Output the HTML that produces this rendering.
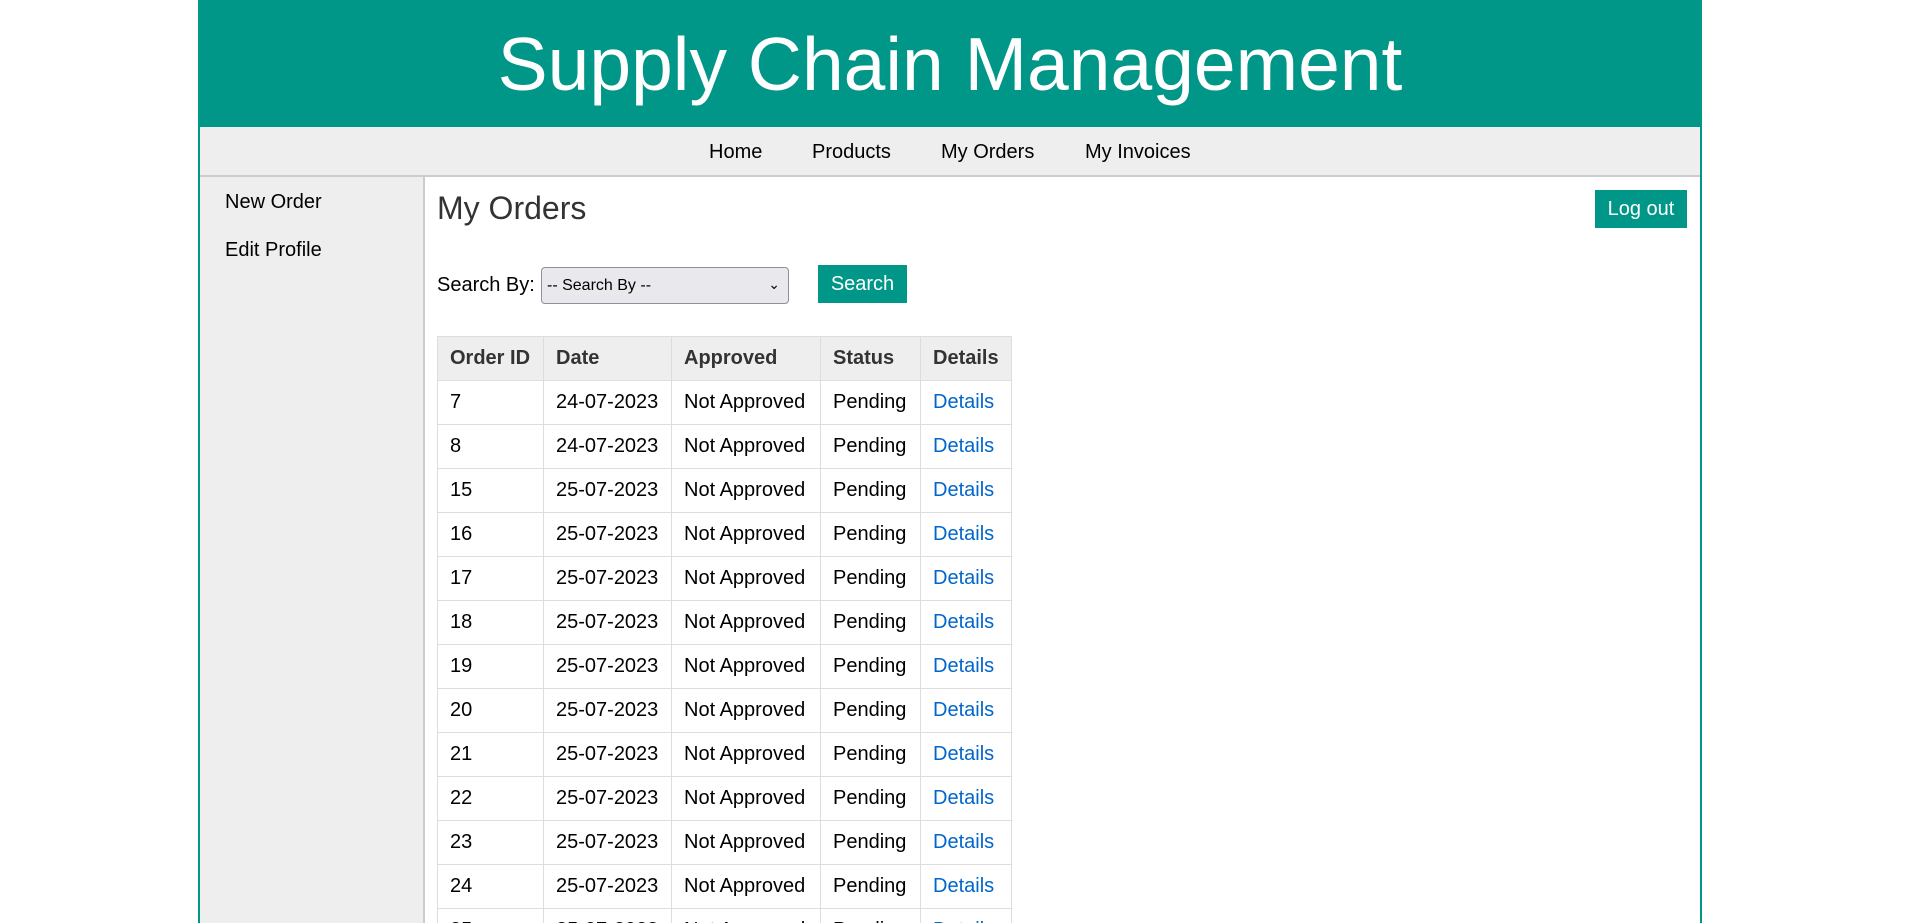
<!DOCTYPE html>
<html style="overflow:hidden;height:923px"><head><meta charset="utf-8"><style>
*{box-sizing:border-box;margin:0;padding:0}
body{width:1920px;height:923px;overflow:hidden;background:#fff;font-family:"Liberation Sans",Arial,sans-serif;position:relative}
.wrap{position:absolute;left:198px;top:0;width:1504px;height:923px;border-left:2px solid #009688;border-right:2px solid #009688;overflow:hidden}
.hdr{position:absolute;left:-2px;right:-2px;top:0;height:127px;background:#009688;color:#fff;font-size:75px;text-align:center;line-height:129px}
.nav{position:absolute;left:0;right:0;top:127px;height:50px;background:#eee;border-bottom:2px solid #ccc}
.nav span{position:absolute;top:14px;font-size:20px;color:#000}
.side{position:absolute;left:0;top:177px;width:225px;height:760px;background:#eee;border-right:2px solid #ccc}
.side div{position:absolute;left:25px;font-size:20px;color:#000}
h1{position:absolute;left:237px;top:190px;font-size:32px;font-weight:normal;color:#333}
.lbl{position:absolute;left:237px;top:274px;font-size:20px}
.sel{position:absolute;left:341px;top:267px;width:248px;height:37px;background:#e9e9ed;border:1px solid #8f8f9d;border-radius:4px;font-size:16px;padding:9px 5px}
.sel i{position:absolute;right:8px;top:8px;font-style:normal;font-size:14px}
.btn{position:absolute;background:#009688;color:#fff;font-size:20px;text-align:center}
table{position:absolute;left:237px;top:336px;border-collapse:collapse;font-size:20px}
td,th{border:1px solid #ddd;height:44px;padding:0 12px;text-align:left;white-space:nowrap}
th{background:#eee;color:#333}
td a{color:#0066cc;text-decoration:none}
</style></head><body>
<div class="wrap">
<div class="hdr">Supply Chain Management</div>
<div class="nav"><span style="left:509px">Home</span><span style="left:612px">Products</span><span style="left:741px">My Orders</span><span style="left:885px">My Invoices</span></div>
<div class="side"><div style="top:14px">New Order</div><div style="top:62px">Edit Profile</div></div>
<h1>My Orders</h1>
<div class="btn" style="left:1395px;top:190px;width:92px;height:38px;line-height:38px">Log out</div>
<div class="lbl">Search By:</div>
<div class="sel">-- Search By --<i>&#8964;</i></div>
<div class="btn" style="left:618px;top:265px;width:89px;height:38px;line-height:38px">Search</div>
<table>
<tr><th style="width:106px">Order ID</th><th style="width:128px">Date</th><th style="width:149px">Approved</th><th style="width:100px">Status</th><th style="width:91px">Details</th></tr>
<tr><td>7</td><td>24-07-2023</td><td>Not Approved</td><td>Pending</td><td><a>Details</a></td></tr>
<tr><td>8</td><td>24-07-2023</td><td>Not Approved</td><td>Pending</td><td><a>Details</a></td></tr>
<tr><td>15</td><td>25-07-2023</td><td>Not Approved</td><td>Pending</td><td><a>Details</a></td></tr>
<tr><td>16</td><td>25-07-2023</td><td>Not Approved</td><td>Pending</td><td><a>Details</a></td></tr>
<tr><td>17</td><td>25-07-2023</td><td>Not Approved</td><td>Pending</td><td><a>Details</a></td></tr>
<tr><td>18</td><td>25-07-2023</td><td>Not Approved</td><td>Pending</td><td><a>Details</a></td></tr>
<tr><td>19</td><td>25-07-2023</td><td>Not Approved</td><td>Pending</td><td><a>Details</a></td></tr>
<tr><td>20</td><td>25-07-2023</td><td>Not Approved</td><td>Pending</td><td><a>Details</a></td></tr>
<tr><td>21</td><td>25-07-2023</td><td>Not Approved</td><td>Pending</td><td><a>Details</a></td></tr>
<tr><td>22</td><td>25-07-2023</td><td>Not Approved</td><td>Pending</td><td><a>Details</a></td></tr>
<tr><td>23</td><td>25-07-2023</td><td>Not Approved</td><td>Pending</td><td><a>Details</a></td></tr>
<tr><td>24</td><td>25-07-2023</td><td>Not Approved</td><td>Pending</td><td><a>Details</a></td></tr>
<tr><td>25</td><td>25-07-2023</td><td>Not Approved</td><td>Pending</td><td><a>Details</a></td></tr>
</table>
</div>
</body></html>
